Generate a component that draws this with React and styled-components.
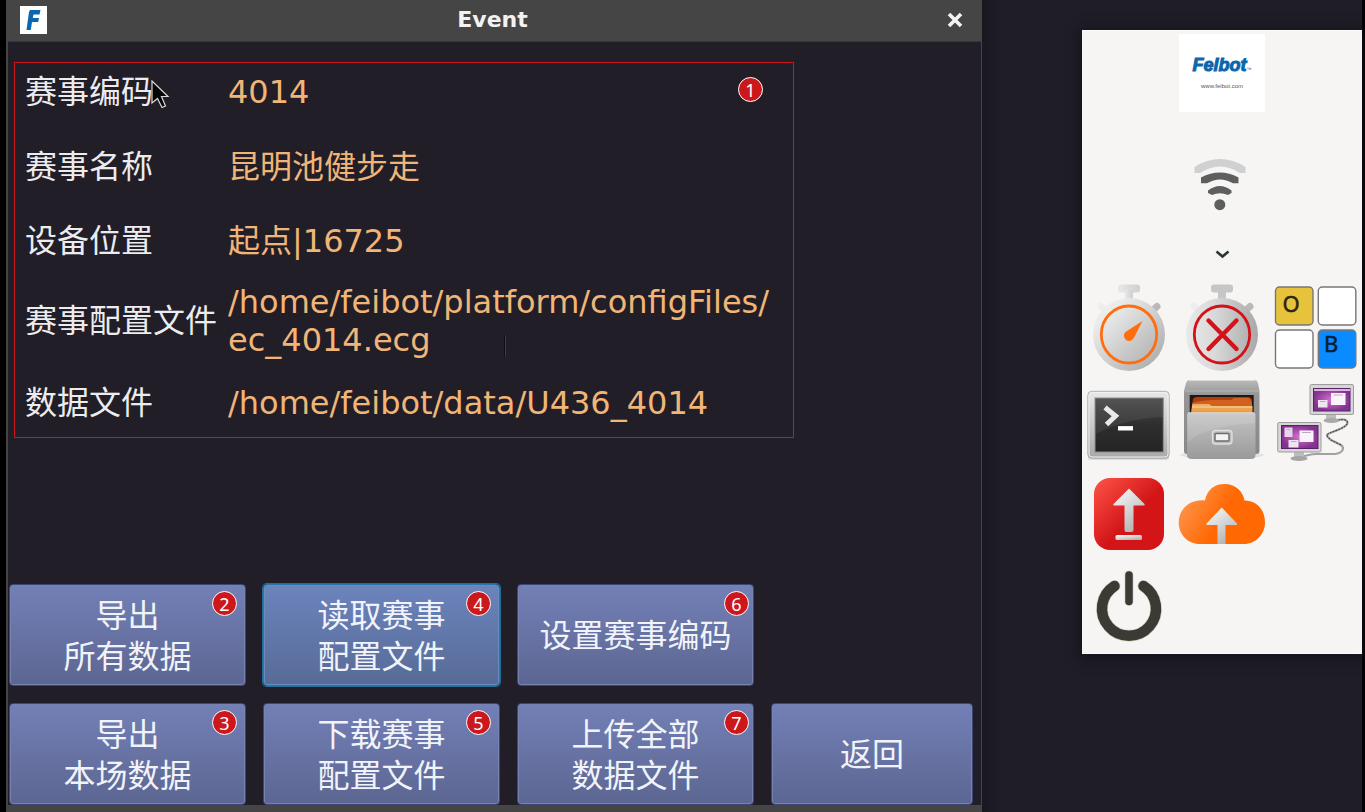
import React from 'react';
import styled, { createGlobalStyle, css } from 'styled-components';

const COLORS = {
  desktop: "#1f1d27",
  window: "#211e28",
  frame: "#454545",
  value: "#f0b577",
  label: "#ececef",
  red: "#cb181c",
};

const GlobalStyle = createGlobalStyle`
  * {
    box-sizing: border-box;
  }
  body {
    margin: 0;
    background: #000;
    font-family: "DejaVu Sans", "Noto Sans CJK SC", sans-serif;
  }
`;

const Screen = styled.div`
  display: flex;
  min-height: 100vh;
  padding: 0 3px 0 6px;
  background: #000;
`;

/* Window */
const Window = styled.main`
  flex: 1;
  min-width: 0;
  display: flex;
  flex-direction: column;
  background: ${COLORS.window};
  border: solid ${COLORS.frame};
  border-width: 0 1px 7px 2px;
`;

const TitleBar = styled.header`
  display: grid;
  grid-template-columns: 1fr auto 1fr;
  align-items: center;
  height: 42px;
  padding: 0 16px 2px 12px;
  background: ${COLORS.frame};
  border-bottom: 1px solid #38373b;
`;

const AppIcon = styled.svg`
  width: 27px;
  height: 28px;
`;

const Title = styled.h1`
  margin: 0;
  font-size: 22px;
  line-height: 24px;
  color: #f2f2f2;
`;

const CloseButton = styled.button`
  justify-self: end;
  display: flex;
  padding: 2px;
  border: none;
  background: none;
  cursor: pointer;
`;

const InfoPanel = styled.dl`
  position: relative;
  display: grid;
  grid-template-columns: 203px 1fr;
  grid-template-rows: 58px 92px 56px 104px 60px;
  align-items: center;
  max-width: 780px;
  margin: 20px 6px 0;
  padding: 0 0 4px 10px;
  border: 1px solid ${COLORS.red};
  font-size: 32px;
  line-height: 38px;
`;

const Label = styled.dt`
  color: ${COLORS.label};
  white-space: nowrap;
`;

const Value = styled.dd`
  margin: 0;
  color: ${COLORS.value};
  white-space: pre-line;
`;

const Caret = styled.span`
  display: inline-block;
  width: 2px;
  height: 22px;
  margin-left: 74px;
  vertical-align: -6px;
  background: #3d3a47;
  border-left: 1px solid #100e16;
`;

const Pointer = styled.svg`
  position: absolute;
  top: 17px;
  left: 136px;
  width: 19px;
  height: 29px;
`;

const Badge = styled.span`
  position: absolute;
  top: ${(props) => props.$top || "6px"};
  right: ${(props) => props.$right || "8px"};
  display: flex;
  align-items: center;
  justify-content: center;
  width: 25px;
  height: 25px;
  border: 1px solid #fff;
  border-radius: 50%;
  background: ${COLORS.red};
  color: #fff;
  font-family: "Noto Sans", sans-serif;
  font-size: 18px;
  line-height: 22px;
`;

const Actions = styled.div`
  display: grid;
  grid-template-columns: 237fr 237fr 237fr 202fr;
  grid-auto-rows: minmax(102px, auto);
  gap: 17px;
  margin-top: auto;
  padding: 0 8px 0 1px;
`;

const ActionButton = styled.button`
  position: relative;
  padding: 3px 0 0;
  border: 1px solid #3c4777;
  border-radius: 4px;
  background: linear-gradient(#7380b6, #5c6692);
  box-shadow: inset 0 0 0 1px #7682b4;
  color: #f1f3fa;
  font-family: inherit;
  font-size: 32px;
  line-height: 41px;
  white-space: pre-line;
  cursor: pointer;
  ${(props) => props.$newRow && css`
    grid-column: 1;
  `}
  ${(props) => props.$active && css`
    border-color: #2478a6;
    background: linear-gradient(#6b84bc, #586b97);
    box-shadow: inset 0 0 0 1px #6c8abb, 0 0 0 1px #1f6f9b;
  `}
`;

/* Desktop launcher */
const Desktop = styled.aside`
  flex: 0 0 380px;
  padding: 30px 0 0 100px;
  background: linear-gradient(90deg, #191720, ${COLORS.desktop} 20px);
`;

const Launcher = styled.nav`
  border-top: 1px solid #fdfdfd;
  border-bottom: 1px solid #fdfdfd;
  background: #f6f5f4;
  box-shadow: 0 2px 12px 2px #14121a;
`;

const Status = styled.div`
  display: flex;
  flex-direction: column;
  align-items: center;
  height: 250px;
  padding-top: 3px;
`;

const Logo = styled.div`
  display: flex;
  flex-direction: column;
  align-items: center;
  width: 86px;
  height: 78px;
  padding-top: 19px;
  background: #fff;
`;

const LogoName = styled.span`
  color: #0b66ae;
  font-family: "Liberation Sans", sans-serif;
  font-size: 18px;
  font-weight: 700;
  font-style: italic;
  line-height: 24px;
  -webkit-text-stroke: 1px #0b66ae;
  sub {
    font-size: 5px;
    font-weight: 400;
    line-height: 1;
    -webkit-text-stroke: 0;
    vertical-align: baseline;
  }
`;

const LogoSite = styled.span`
  margin-top: 5px;
  color: #555;
  font-family: "Liberation Sans", sans-serif;
  font-size: 6px;
  line-height: 8px;
`;

const Wifi = styled.svg`
  width: 57px;
  height: 52px;
  margin-top: 47px;
`;

const Expand = styled.button`
  display: flex;
  margin-top: 35px;
  padding: 4px;
  border: none;
  background: none;
  cursor: pointer;
`;

const Apps = styled.div`
  display: grid;
  grid-template-columns: repeat(3, 1fr);
  grid-auto-rows: 93px;
`;

const AppButton = styled.button`
  display: flex;
  padding: 0;
  border: none;
  background: none;
  cursor: pointer;
  svg {
    width: 93px;
    height: 93px;
    overflow: visible;
  }
  ${(props) => props.$newRow && css`
    grid-column: 1;
  `}
`;

const Icon = ({ children }) => (
  <svg viewBox="0 0 93 93" aria-hidden="true">{children}</svg>
);

const GradientDefs = styled.svg`
  position: absolute;
  width: 0;
  height: 0;
`;

const Gradients = () => (
  <GradientDefs aria-hidden="true">
    <defs>
      <linearGradient id="steel" x1="0" y1="0" x2="1" y2="1">
        <stop offset="0.2" stopColor="#ececec" />
        <stop offset="0.9" stopColor="#aeaeae" />
      </linearGradient>
      <linearGradient id="steelFlat" x1="0" x2="1">
        <stop offset="0" stopColor="#e9e9e9" />
        <stop offset="0.4" stopColor="#d9d9d9" />
        <stop offset="1" stopColor="#a8a8a8" />
      </linearGradient>
      <linearGradient id="cap" x1="0" x2="1">
        <stop offset="0" stopColor="#e8e8e8" />
        <stop offset="1" stopColor="#cfcfcf" />
      </linearGradient>
      <linearGradient id="arrow" x1="0" y1="0" x2="0.6" y2="1">
        <stop offset="0.1" stopColor="#f6f6f6" />
        <stop offset="1" stopColor="#b4b4b4" />
      </linearGradient>
      <linearGradient id="redTile" x1="0" y1="0" x2="1" y2="1">
        <stop offset="0" stopColor="#ff5548" />
        <stop offset="0.55" stopColor="#d31518" />
      </linearGradient>
      <linearGradient id="cloud" x1="0" y1="0.2" x2="1" y2="0.6">
        <stop offset="0" stopColor="#ff9a55" />
        <stop offset="0.55" stopColor="#ff6803" />
      </linearGradient>
      <linearGradient id="bezel" x1="0" y1="0" x2="0" y2="1">
        <stop offset="0" stopColor="#e8e8e8" />
        <stop offset="1" stopColor="#a9a9a9" />
      </linearGradient>
      <linearGradient id="terminal" x1="0" y1="0" x2="0" y2="1">
        <stop offset="0" stopColor="#474747" />
        <stop offset="0.5" stopColor="#2e2e2e" />
        <stop offset="1" stopColor="#242424" />
      </linearGradient>
      <linearGradient id="cabinet" x1="0" y1="0" x2="0" y2="1">
        <stop offset="0" stopColor="#b9b9b9" />
        <stop offset="0.2" stopColor="#969696" />
        <stop offset="1" stopColor="#888" />
      </linearGradient>
      <linearGradient id="drawer" x1="0" y1="0" x2="0" y2="1">
        <stop offset="0" stopColor="#c4c4c4" />
        <stop offset="1" stopColor="#9a9a9a" />
      </linearGradient>
      <linearGradient id="folder" x1="0" y1="0" x2="0" y2="1">
        <stop offset="0" stopColor="#f1b266" />
        <stop offset="1" stopColor="#e8973f" />
      </linearGradient>
      <radialGradient id="purple">
        <stop offset="0" stopColor="#d673d2" />
        <stop offset="1" stopColor="#83338f" />
      </radialGradient>
    </defs>
  </GradientDefs>
);

const Stopwatch = ({ color, fill, cap, children }) => (
  <Icon>
    <rect x="36" y="3.5" width="22" height="8" rx="3" fill={cap} />
    <rect x="43" y="9" width="8" height="12" fill={cap} />
    <path d="M69 31L75 25.5" stroke="#b9b9b9" strokeWidth="7" strokeLinecap="round" />
    <path d="M25 31L19 25.5" stroke="#ededed" strokeWidth="7" strokeLinecap="round" />
    <ellipse cx="47" cy="53.5" rx="36" ry="36.5" fill={fill} />
    <ellipse cx="47" cy="53.5" rx="27.7" ry="28.5" fill="none" stroke={color} strokeWidth="2.8" />
    {children}
  </Icon>
);

const KeysIcon = () => (
  <Icon>
    <g stroke="#777" strokeWidth="1.4">
      <rect x="6.5" y="6" width="37.5" height="38" rx="4" fill="#e7c33c" />
      <rect x="49.3" y="6" width="37.5" height="38" rx="4" fill="#fff" />
      <rect x="6.5" y="49" width="37.5" height="38" rx="4" fill="#fff" />
      <rect x="49.3" y="49" width="37.5" height="38" rx="4" fill="#0a8bff" />
    </g>
    <g fontFamily="Noto Sans" fontSize="22" strokeWidth="0.5">
      <text x="13.5" y="31" fill="#2b270f" stroke="#2b270f">O</text>
      <text x="55" y="71" fill="#082033" stroke="#082033">B</text>
    </g>
  </Icon>
);

const TerminalIcon = () => (
  <Icon>
    <rect x="6" y="82" width="81" height="4" rx="2" fill="#dcdbd9" />
    <rect x="5.8" y="17.3" width="81.4" height="67" rx="4" fill="url(#bezel)" stroke="#b0b0b0" />
    <rect x="7" y="18.5" width="79" height="64.5" rx="3" fill="none" stroke="#f0f0f0" />
    <rect x="13" y="24" width="68.3" height="54" fill="url(#terminal)" stroke="#8d8d8d" />
    <path d="M13.5 24.5H81V43Q42 45 13.5 60Z" fill="#fff" opacity="0.07" />
    <path d="M23 33.5L33.5 42L24.5 50.5" fill="none" stroke="#e8e8e8" strokeWidth="5" />
    <path d="M36 54.3H51" stroke="#fff" strokeWidth="4.4" />
  </Icon>
);

const CabinetIcon = () => (
  <Icon>
    <ellipse cx="47" cy="81" rx="42" ry="4" fill="#e3e2e1" />
    <path d="M14 6H80Q82 6 83 9L84.5 17V77Q84.5 80 81 80H12Q9 80 9 77V17L11 9Q12 6 14 6Z" fill="url(#cabinet)" />
    <path d="M14 6.5H80" stroke="#d9d9d9" />
    <path d="M10 17H84" stroke="#b4b4b4" />
    <rect x="14.7" y="21" width="64" height="20" fill="#1e1915" />
    <path d="M18 25Q19 23 22 23H73Q76 23 77 26V40H16Z" fill="#b03c12" />
    <path d="M17 29Q30 25 56 26L59 24H74L77 29V40H17Z" fill="#d2601f" />
    <path d="M17 32Q17 30 19 30H34L37 32H77.5V40H16Z" fill="url(#folder)" />
    <path d="M17 33H77" stroke="#fbd39a" />
    <path d="M14 38.5H78Q80.5 38.5 80.5 41V81Q80.5 85 76 85H17Q12 85 12 81V41Q12 38.5 14 38.5Z" fill="url(#drawer)" />
    <path d="M13 39H79.5" stroke="#e2e2e2" />
    <path d="M13 40H80V49Q30 52 13 68Z" fill="#fff" opacity="0.12" />
    <rect x="37.5" y="56.5" width="19.5" height="13.5" rx="3" fill="#bcbcbc" stroke="#e0e0e0" strokeWidth="1.3" />
    <rect x="40" y="59.5" width="14" height="7.5" rx="1" fill="#f3f3f3" stroke="#6d6d6d" strokeWidth="1.5" />
  </Icon>
);

const RemoteIcon = () => (
  <Icon>
    <path d="M69 46C78 44 83 49 73 54C58 61 54 59 62 66L72 71C76 74 74 79 66 80H48C42 80 40 81 35 82" fill="none" stroke="#a2a2a2" strokeWidth="2.2" />
    <path d="M69 46C78 44 83 49 73 54C58 61 54 59 62 66L72 71" fill="none" stroke="#4c4c4c" strokeWidth="1.2" strokeDasharray="2 1" />
    <rect x="57" y="40" width="10" height="6" fill="#bdbdbd" />
    <ellipse cx="62.5" cy="46.5" rx="8" ry="2.5" fill="#aaa" />
    <rect x="41" y="10.5" width="43.5" height="30" rx="1.5" fill="#d6d6d6" stroke="#9d9d9d" />
    <rect x="44.5" y="14.5" width="36.5" height="22.5" fill="url(#purple)" stroke="#5a2168" />
    <path d="M45 16H81" stroke="#d9b5dc" strokeWidth="2" />
    <rect x="49" y="26" width="9.5" height="7.5" fill="#f0e3f2" />
    <rect x="62" y="19" width="14.5" height="12" fill="#fbf3fb" />
    <path d="M64.5 21H74M51 27.5H56.5" stroke="#bcaabc" />
    <rect x="25" y="77" width="10" height="6" fill="#bdbdbd" />
    <ellipse cx="30" cy="84.5" rx="8.5" ry="2.5" fill="#a5a5a5" />
    <rect x="8.7" y="48.5" width="43.3" height="29.5" rx="1.5" fill="#d6d6d6" stroke="#9d9d9d" />
    <rect x="12.5" y="51.5" width="36.5" height="23" fill="url(#purple)" stroke="#5a2168" />
    <rect x="15.5" y="53.5" width="8" height="9.5" fill="#e8d5eb" />
    <rect x="30.5" y="56.5" width="14" height="11.5" fill="#fbf3fb" />
    <rect x="19.5" y="66" width="10" height="7.5" fill="#f0e3f2" />
    <path d="M33 58.5H42M22 67.5H27.5M17.5 55.5H21.5" stroke="#bcaabc" />
  </Icon>
);

const UploadIcon = () => (
  <Icon>
    <rect x="12" y="11" width="70" height="72" rx="16" fill="url(#redTile)" />
    <path d="M47 21.5L62.5 37Q63 38.500 61.5 38.5H51.5V63Q51.5 65 49.5 65H44.5Q42.500 65 42.5 63V38.5H32.5Q31 38.5 31.5 37Z" fill="url(#arrow)" />
    <rect x="33.5" y="68" width="26.5" height="5" rx="1.5" fill="url(#arrow)" />
  </Icon>
);

const CloudIcon = () => (
  <Icon>
    <path d="M25 77C12 77 3.7 67 3.7 55.5C3.7 42 15 32 30 33.5C32 23 39 17 49.7 17C60 17 68 24 69.5 33.5C82 33.5 90 43 90 55.5C90 67 81 77 69 77Z" fill="url(#cloud)" />
    <path d="M46.700 40.5L62 56.5Q62.5 58 61 58H50.5V77H42.5V58H32.5Q31 58 31.5 56.5Z" fill="url(#arrow)" />
  </Icon>
);

const PowerIcon = () => (
  <Icon>
    <g fill="none" strokeLinecap="round">
      <path d="M32.5 26A27 27 0 1 0 61.5 26" stroke="#d8d8c6" strokeWidth="12" />
      <path d="M47 15V41.5" stroke="#d8d8c6" strokeWidth="9" />
      <path d="M32.5 26A27 27 0 1 0 61.5 26" stroke="#3b3a34" strokeWidth="10.5" />
      <path d="M47 15V41.5" stroke="#3b3a34" strokeWidth="7.5" />
    </g>
  </Icon>
);

const apps = [
  { name: "Start timing", icon: (
    <Stopwatch color="#ff6d0d" fill="url(#steel)" cap="url(#cap)">
      <path d="M60.5 40L51.8 57A5.2 5.2 0 1 1 43.5 51Z" fill="#ff6d0d" />
    </Stopwatch>
  ) },
  { name: "Stop timing", icon: (
    <Stopwatch color="#d31219" fill="url(#steelFlat)" cap="#c6c6c6">
      <path d="M33.5 39.5L61.5 68M61.5 39.5L33.5 68" stroke="#d31219" strokeWidth="4.4" strokeLinecap="round" />
    </Stopwatch>
  ) },
  { name: "Keys", icon: <KeysIcon /> },
  { name: "Terminal", icon: <TerminalIcon /> },
  { name: "Files", icon: <CabinetIcon /> },
  { name: "Remote desktop", icon: <RemoteIcon /> },
  { name: "Upload", icon: <UploadIcon /> },
  { name: "Cloud upload", icon: <CloudIcon /> },
  { name: "Power", icon: <PowerIcon />, newRow: true },
];

const info = [
  { label: "赛事编码", value: "4014" },
  { label: "赛事名称", value: "昆明池健步走" },
  { label: "设备位置", value: "起点|16725" },
  { label: "赛事配置文件", value: "/home/feibot/platform/configFiles/\nec_4014.ecg", caret: true },
  { label: "数据文件", value: "/home/feibot/data/U436_4014" },
];

const actions = [
  { text: "导出\n所有数据", badge: 2 },
  { text: "读取赛事\n配置文件", badge: 4, active: true },
  { text: "设置赛事编码", badge: 6, right: "4px" },
  { text: "导出\n本场数据", badge: 3, newRow: true },
  { text: "下载赛事\n配置文件", badge: 5 },
  { text: "上传全部\n数据文件", badge: 7, right: "4px" },
  { text: "返回" },
];

function App() {
  return (
    <>
      <GlobalStyle />
      <Gradients />
      <Screen>
        <Window>
          <TitleBar>
            <AppIcon viewBox="0 0 27 28" aria-hidden="true">
              <rect width="27" height="28" fill="#fff" />
              <path d="M10 4H20.5L19.5 8.5H13.5L12.8 12H19L18.2 16H12L10.8 24H6.5L9 6Z" fill="#0b66ae" />
            </AppIcon>
            <Title>Event</Title>
            <CloseButton aria-label="Close">
              <svg width="16" height="16" viewBox="0 0 16 16">
                <path d="M2 2L14 14M14 2L2 14" stroke="#f4f4f4" strokeWidth="3.6" />
              </svg>
            </CloseButton>
          </TitleBar>

          <InfoPanel>
            {info.map((row) => (
              <React.Fragment key={row.label}>
                <Label>{row.label}</Label>
                <Value>{row.value}{row.caret && <Caret />}</Value>
              </React.Fragment>
            ))}
            <Badge $top="14px" $right="30px">1</Badge>
            <Pointer viewBox="0 0 19 29" aria-hidden="true">
              <path d="M1 1V23L6.5 18.5L11 27.5L14.5 26L10.5 16.5H17Z" fill="#050505" stroke="#d8d8d8" strokeWidth="1.2" />
            </Pointer>
          </InfoPanel>

          <Actions>
            {actions.map((a) => (
              <ActionButton key={a.text} $active={a.active} $newRow={a.newRow}>
                {a.text}
                {a.badge && <Badge $right={a.right}>{a.badge}</Badge>}
              </ActionButton>
            ))}
          </Actions>
        </Window>

        <Desktop>
          <Launcher>
            <Status>
              <Logo>
                <LogoName>Feibot<sub>™</sub></LogoName>
                <LogoSite>www.feibot.com</LogoSite>
              </Logo>
              <Wifi viewBox="0 0 57 52" aria-hidden="true">
                <path d="M0.500 8Q26 -8 51.5 8V14H46Q26 1 6 14H0.5Z" fill="#d0d0d0" />
                <path d="M7 18.5Q26 8.5 44.5 18.5V24.3H39Q26 16.5 13 24.3H7Z" fill="#5e5e5e" />
                <path d="M14 31.5Q26 22.5 37.5 31.5V34L34 36Q26 32.5 18 36L14 34Z" fill="#5e5e5e" />
                <circle cx="25.8" cy="45.7" r="5.5" fill="#5e5e5e" />
              </Wifi>
              <Expand aria-label="Expand">
                <svg width="15" height="9" viewBox="0 0 15 9">
                  <path d="M1.5 1.5L7.5 6.5L13.5 1.5" fill="none" stroke="#2e3436" strokeWidth="2.6" />
                </svg>
              </Expand>
            </Status>
            <Apps>
              {apps.map((app) => (
                <AppButton key={app.name} aria-label={app.name} $newRow={app.newRow}>
                  {app.icon}
                </AppButton>
              ))}
            </Apps>
          </Launcher>
        </Desktop>
      </Screen>
    </>
  );
}

export default App;
